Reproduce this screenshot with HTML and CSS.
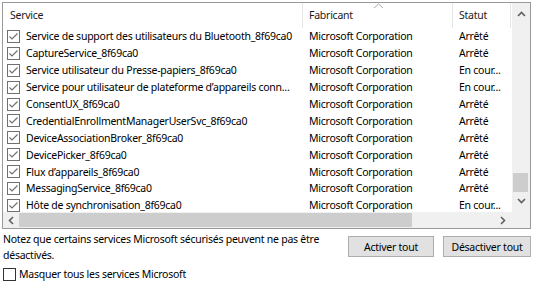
FILE: index.html
```html
<!DOCTYPE html>
<html lang="fr">
<head>
    <meta charset="UTF-8">
    <meta name="viewport" content="width=device-width, initial-scale=1.0">
    <title>Services</title>
    <link rel="stylesheet" href="styles.css">
</head>
<body>
    <div class="list">
        <div class="view">
            <div class="header">
                <div class="hcell">Service</div>
                <div class="hcell sorted">Fabricant
                    <svg class="sort" width="11" height="6" viewBox="0 0 11 6"><path d="M1 5 L5.5 1 L10 5" fill="none" stroke="#a8a8a8" stroke-width="1"/></svg>
                </div>
                <div class="hcell">Statut</div>
            </div>
            <div id="rows"></div>
        </div>
        <div class="vscroll">
            <svg class="arrow" width="9" height="6" viewBox="0 0 9 6"><path d="M1 5 L4.5 1.5 L8 5" fill="none" stroke="#606060" stroke-width="1.6"/></svg>
            <div class="vtrack"><div class="vthumb"></div></div>
            <svg class="arrow" width="9" height="6" viewBox="0 0 9 6"><path d="M1 1 L4.5 4.5 L8 1" fill="none" stroke="#606060" stroke-width="1.6"/></svg>
        </div>
        <div class="hscroll">
            <svg class="arrow" width="6" height="9" viewBox="0 0 6 9"><path d="M5 1 L1.5 4.5 L5 8" fill="none" stroke="#606060" stroke-width="1.6"/></svg>
            <div class="htrack"><div class="hthumb"></div></div>
            <svg class="arrow" width="6" height="9" viewBox="0 0 6 9"><path d="M1 1 L4.5 4.5 L1 8" fill="none" stroke="#606060" stroke-width="1.6"/></svg>
        </div>
        <div class="corner"></div>
    </div>

    <div class="bottom">
        <p class="note">Notez que certains services Microsoft sécurisés peuvent ne pas être désactivés.</p>
        <div class="buttons">
            <button class="btn btn-on">Activer tout</button>
            <button class="btn btn-off">Désactiver tout</button>
        </div>
    </div>
    <label class="hide">
        <span class="box"></span>
        Masquer tous les services Microsoft
    </label>

    <script>
        const services = [
            ['Service de support des utilisateurs du Bluetooth_8f69ca0', 'Arrêté'],
            ['CaptureService_8f69ca0', 'Arrêté'],
            ['Service utilisateur du Presse-papiers_8f69ca0', 'En cour...'],
            ['Service pour utilisateur de plateforme d’appareils conn...', 'En cour...'],
            ['ConsentUX_8f69ca0', 'Arrêté'],
            ['CredentialEnrollmentManagerUserSvc_8f69ca0', 'Arrêté'],
            ['DeviceAssociationBroker_8f69ca0', 'Arrêté'],
            ['DevicePicker_8f69ca0', 'Arrêté'],
            ['Flux d’appareils_8f69ca0', 'Arrêté'],
            ['MessagingService_8f69ca0', 'Arrêté'],
            ['Hôte de synchronisation_8f69ca0', 'En cour...']
        ];
        const check = '<svg class="check" width="13" height="13" viewBox="0 0 13 13">' +
            '<rect x="0.5" y="0.5" width="12" height="12" fill="#fff" stroke="#707070"/>' +
            '<path d="M2.5 6.5 L5 9 L10.5 3.5" fill="none" stroke="#707070" stroke-width="1.2"/></svg>';
        const rows = document.getElementById('rows');
        services.forEach(s => {
            const row = document.createElement('div');
            row.className = 'row';
            row.innerHTML = `
                <div class="cell first">${check}<span class="txt">${s[0]}</span></div>
                <div class="cell">Microsoft Corporation</div>
                <div class="cell">${s[1]}</div>
            `;
            rows.appendChild(row);
        });
    </script>
</body>
</html>
```

FILE: styles.css
```css
body {
    margin: 0;
    padding: 2px 3px 0 2px;
    background: #fff;
    color: #000;
    font-family: 'Segoe UI', 'Noto Sans', sans-serif;
    font-size: 10.5px;
    letter-spacing: -0.25px;
}
.list {
    display: grid;
    grid-template-columns: 1fr 18px;
    grid-template-rows: 1fr 16px;
    height: 225px;
    border: 1px solid #999;
    background: #fff;
}
.view {
    overflow: hidden;
}
.header {
    display: grid;
    grid-template-columns: 300px 150px 58px;
    height: 25px;
}
.hcell {
    position: relative;
    display: flex;
    align-items: center;
    padding-left: 6px;
    padding-bottom: 1px;
    border-right: 1px solid #e5e5e5;
    color: #1a1a1a;
}
.hcell:first-child {
    padding-left: 7px;
}
.sort {
    position: absolute;
    left: 70px;
    top: 0;
}
.row {
    display: grid;
    grid-template-columns: 300px 150px 58px;
    height: 16.9px;
    align-items: center;
}
.cell {
    padding-left: 6px;
    white-space: nowrap;
    overflow: hidden;
}
.cell.first {
    display: flex;
    align-items: center;
    gap: 6px;
    padding-left: 4px;
}
.check {
    flex: none;
}
.vscroll {
    display: flex;
    flex-direction: column;
    align-items: center;
    background: #f0f0f0;
    padding: 8px 0;
    gap: 5px;
}
.vtrack {
    flex: 1;
    width: 100%;
    display: flex;
    flex-direction: column;
    justify-content: flex-end;
    padding-bottom: 1px;
}
.vthumb {
    height: 19px;
    margin: 0 2px 0 1px;
    background: #cdcdcd;
}
.hscroll {
    display: flex;
    align-items: center;
    background: #f0f0f0;
    padding: 0 6px 0 5px;
    gap: 5px;
}
.htrack {
    flex: 1;
    height: 100%;
    display: flex;
    align-items: center;
}
.hthumb {
    width: 393px;
    height: 14px;
    background: #cdcdcd;
}
.corner {
    background: #f0f0f0;
}
.bottom {
    display: flex;
    justify-content: space-between;
    padding-left: 1px;
}
.note {
    margin: 2px 0 0;
    width: 345px;
    line-height: 16px;
}
.buttons {
    display: flex;
    gap: 9px;
    margin-top: 7px;
}
.btn {
    height: 21px;
    padding: 0;
    border: 1px solid #adadad;
    background: #e1e1e1;
    color: #000;
    font-family: inherit;
    font-size: 10.5px;
    letter-spacing: -0.25px;
}
.btn-on {
    width: 86px;
}
.btn-off {
    width: 88px;
}
.hide {
    display: flex;
    align-items: center;
    gap: 3px;
    margin-top: 4px;
    padding-left: 1px;
}
.box {
    width: 11px;
    height: 11px;
    border: 1px solid #333;
    background: #fff;
}
```
